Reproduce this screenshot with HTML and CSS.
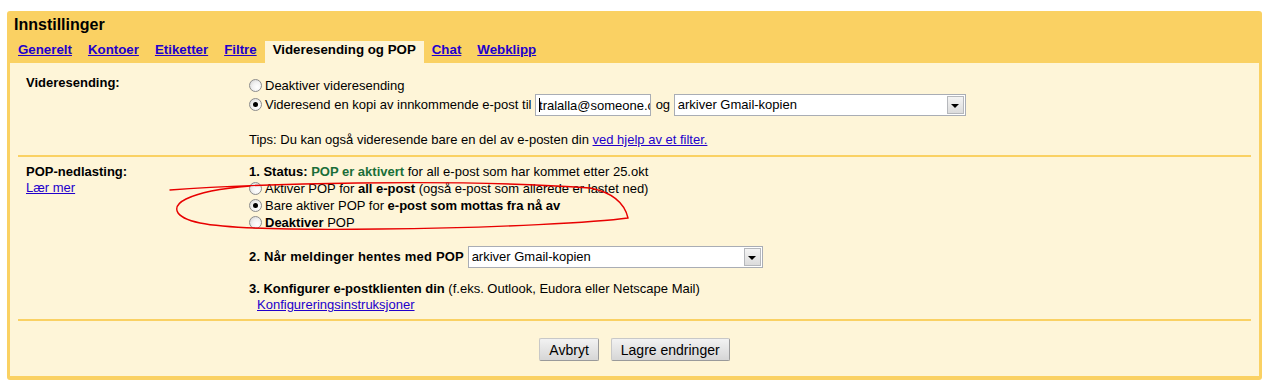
FILE: index.html
```html
<!DOCTYPE html>
<html lang="no">
<head>
<meta charset="utf-8">
<title>Innstillinger</title>
<link rel="stylesheet" href="styles.css">
</head>
<body>
<div class="page">
  <div class="box">
    <div class="head">
      <h1 class="title">Innstillinger</h1>
      <nav class="tabs">
        <a class="tab" href="#">Generelt</a>
        <a class="tab" href="#">Kontoer</a>
        <a class="tab" href="#">Etiketter</a>
        <a class="tab" href="#">Filtre</a>
        <span class="tab active">Videresending og POP</span>
        <a class="tab" href="#">Chat</a>
        <a class="tab" href="#">Webklipp</a>
      </nav>
    </div>
    <div class="content">
      <section class="sect sect-fwd">
        <div class="label"><b>Videresending:</b></div>
        <div class="body">
          <div class="row"><span class="radio"></span>Deaktiver videresending</div>
          <div class="row row-tall"><span class="radio on"></span>Videresend en kopi av innkommende e-post til <span class="input-wrap"><input class="input" type="text" value="tralalla@someone.com" readonly><span class="caret"></span></span> og <span class="select w1"><span class="sel-text">arkiver Gmail-kopien</span><span class="sel-btn"><span class="tri"></span></span></span></div>
          <div class="tips">Tips: Du kan også videresende bare en del av e-posten din <a href="#">ved hjelp av et filter.</a></div>
        </div>
      </section>
      <section class="sect sect-pop">
        <div class="label"><b>POP-nedlasting:</b><br><a href="#">Lær mer</a></div>
        <div class="body">
          <div class="line"><b>1. Status: <span class="green">POP er aktivert</span></b> for all e-post som har kommet etter 25.okt</div>
          <div class="row"><span class="radio"></span>Aktiver POP for <b>all e-post</b> (også e-post som allerede er lastet ned)</div>
          <div class="row"><span class="radio on"></span>Bare aktiver POP for <b>e-post som mottas fra nå av</b></div>
          <div class="row"><span class="radio"></span><b>Deaktiver</b> POP</div>
          <div class="row row-tall sel-row"><b class="step-label">2. Når meldinger hentes med POP</b> <span class="select w2"><span class="sel-text">arkiver Gmail-kopien</span><span class="sel-btn"><span class="tri"></span></span></span></div>
          <div class="line step3"><b>3. Konfigurer e-postklienten din</b> (f.eks. Outlook, Eudora eller Netscape Mail)</div>
          <div class="line indent"><a href="#">Konfigureringsinstruksjoner</a></div>
        </div>
      </section>
      <div class="actions">
        <button class="btn" type="button">Avbryt</button>
        <button class="btn" type="button">Lagre endringer</button>
      </div>
    </div>
  </div>
  <svg class="scribble" width="1267" height="390" viewBox="0 0 1267 390" aria-hidden="true">
    <path d="M170,190 C250,184 450,178 590,188 C615,193 625,205 628,218 C600,222 500,228 380,229 C300,230 230,229 200,223 C172,217 172,206 186,199 C200,192 225,188 250,186" fill="none" stroke="#e80000" stroke-width="1.4" stroke-linecap="round"/>
  </svg>
</div>
</body>
</html>
```

FILE: styles.css
```css
html, body {
  margin: 0;
  padding: 0;
  background: #ffffff;
}
body {
  font-family: "Liberation Sans", Arial, sans-serif;
  font-size: 13px;
  color: #000;
}
.page {
  position: relative;
  padding: 11px 5px 9px 7px;
}
.box {
  background: #fad163;
  border-radius: 3px;
  padding: 0 3px 4px 3px;
}
.head {
  display: flex;
  flex-direction: column;
}
.title {
  margin: 0;
  padding: 4px 0 0 4px;
  font-size: 16px;
  line-height: 20px;
  font-weight: bold;
}
.tabs {
  display: flex;
  margin-top: 6px;
  height: 22px;
}
.tab {
  padding: 0 8px;
  line-height: 18px;
  font-weight: bold;
  font-size: 13.3px;
  color: #2200cc;
  text-decoration: underline;
}
.tab.active {
  background: #fef5d8;
  color: #000;
  text-decoration: none;
}
.content {
  background: #fef5d8;
}
.sect {
  display: grid;
  grid-template-columns: 223px 1fr;
  margin: 0 8px;
  padding-left: 8px;
  border-bottom: 2px solid #fad163;
}
.sect-fwd {
  padding-top: 12px;
  padding-bottom: 7px;
}
.sect-fwd .body {
  padding-top: 2px;
}
.sect-pop {
  padding-top: 7px;
  padding-bottom: 6px;
}
.label {
  line-height: 16px;
}
a {
  color: #2200cc;
}
.row {
  height: 17px;
  line-height: 17px;
  white-space: nowrap;
}
.row-tall {
  height: 22px;
  line-height: 22px;
}
.line {
  line-height: 16px;
  white-space: nowrap;
}
.tips {
  margin-top: 16px;
  line-height: 16px;
}
.green {
  color: #1a6e38;
}
.radio {
  display: inline-block;
  box-sizing: border-box;
  width: 13px;
  height: 13px;
  margin-right: 3px;
  vertical-align: -2px;
  border-radius: 50%;
  border: 1px solid #8c8c8c;
  background: radial-gradient(circle at 65% 65%, #ffffff 0%, #f2f2f2 45%, #cfcfcf 100%);
  position: relative;
}
.radio.on::after {
  content: "";
  position: absolute;
  left: 3px;
  top: 3px;
  width: 5px;
  height: 5px;
  border-radius: 50%;
  background: #000;
}
.input-wrap {
  display: inline-block;
  position: relative;
  vertical-align: top;
  margin: 0 1px 0 0;
}
.input {
  display: block;
  box-sizing: border-box;
  width: 116px;
  height: 22px;
  margin: 0;
  padding: 0 0 0 3px;
  border: 1px solid #a9adb5;
  background: #fff;
  font-family: "Liberation Sans", Arial, sans-serif;
  font-size: 13px;
  color: #000;
  outline: none;
}
.caret {
  position: absolute;
  left: 4px;
  top: 4px;
  width: 1px;
  height: 14px;
  background: #000;
}
.select {
  display: inline-flex;
  align-items: center;
  box-sizing: border-box;
  vertical-align: top;
  height: 22px;
  border: 1px solid #a9adb5;
  background: #fff;
  padding: 0 1px 0 3px;
  line-height: 18px;
}
.w1 { width: 292px; }
.w2 { width: 295px; }
.step-label {
  letter-spacing: 0.2px;
}
.sel-text {
  flex: 1;
}
.sel-btn {
  box-sizing: border-box;
  width: 17px;
  height: 18px;
  border: 1px solid #b6b8bc;
  background: linear-gradient(#f4f4f4, #dcdcdc);
  display: flex;
  align-items: center;
  justify-content: center;
}
.tri {
  width: 0;
  height: 0;
  border-left: 4px solid transparent;
  border-right: 4px solid transparent;
  border-top: 4px solid #000;
  margin-top: 1px;
}
.sel-row {
  margin-top: 15px;
}
.step3 {
  margin-top: 13px;
}
.indent {
  padding-left: 8px;
}
.actions {
  display: flex;
  justify-content: center;
  gap: 12px;
  padding: 17px 0 15px;
}
.btn {
  font-family: "Liberation Sans", Arial, sans-serif;
  font-size: 14px;
  height: 23px;
  padding: 0 9px;
  border: 1px solid #9a9a9a;
  border-top-color: #c8c8c8;
  border-left-color: #c8c8c8;
  border-radius: 2px;
  background: linear-gradient(#f2f2f2, #d6d6d6);
  color: #000;
}
.scribble {
  position: absolute;
  left: 0;
  top: 0;
  pointer-events: none;
}
```
